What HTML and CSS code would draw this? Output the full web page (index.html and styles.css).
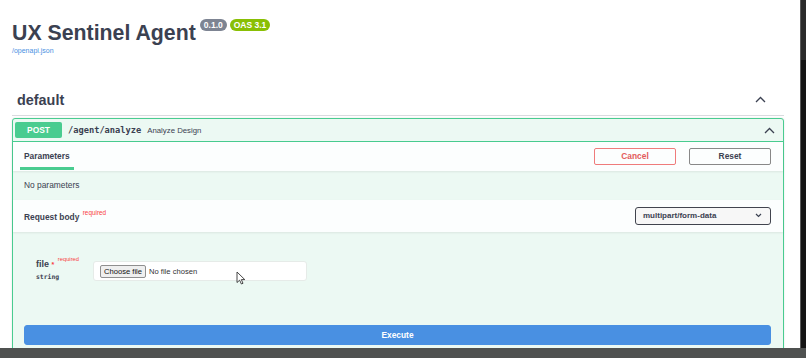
FILE: index.html
```html
<!DOCTYPE html>
<html>
<head lang="en">
    <meta charset="UTF-8">
    <title>UX Sentinel Agent - Swagger UI</title>
    <link rel="stylesheet" href="styles.css">
</head>
<body>
<div class="screen">
    <div class="viewport">
        <div class="info">
            <h1 class="title">UX Sentinel Agent
                <span class="badges">
                    <small class="version">0.1.0</small>
                    <small class="oas">OAS 3.1</small>
                </span>
            </h1>
            <a class="spec-link" href="#">/openapi.json</a>
        </div>
        <section class="tag">
            <h3 class="tag-title">
                <span>default</span>
                <svg class="chev" width="11" height="7" viewBox="0 0 11 7"><path d="M1 6L5.5 1.5L10 6" fill="none" stroke="#3b4151" stroke-width="1.3"/></svg>
            </h3>
            <div class="opblock">
                <div class="summary">
                    <span class="method">POST</span>
                    <span class="path">/agent/analyze</span>
                    <span class="desc">Analyze Design</span>
                    <svg class="chev" width="11" height="7" viewBox="0 0 11 7"><path d="M1 6L5.5 1.5L10 6" fill="none" stroke="#3b4151" stroke-width="1.3"/></svg>
                </div>
                <div class="section-head">
                    <div class="tab">Parameters</div>
                    <div class="actions">
                        <button class="btn cancel">Cancel</button>
                        <button class="btn reset">Reset</button>
                    </div>
                </div>
                <div class="section-body">No parameters</div>
                <div class="section-head body-head">
                    <div class="label">Request body <sup class="req">required</sup></div>
                    <div class="select">
                        <span>multipart/form-data</span>
                        <svg width="7" height="5" viewBox="0 0 7 5"><path d="M1 1L3.5 3.5L6 1" fill="none" stroke="#3b4151" stroke-width="1.2"/></svg>
                    </div>
                </div>
                <div class="body-params">
                    <div class="param">
                        <div class="param-name">
                            <div class="name">file <span class="star">*</span> <sup class="req">required</sup></div>
                            <div class="type">string</div>
                        </div>
                        <div class="file-box">
                            <span class="choose">Choose file</span>
                            <span class="none">No file chosen</span>
                            <svg class="cursor" width="10" height="14" viewBox="0 0 10 14"><path d="M1 1V11.5L3.6 9.2L5.4 13L7 12.3L5.3 8.6H8.8Z" fill="#fff" stroke="#333" stroke-width="0.9" stroke-linejoin="round"/></svg>
                        </div>
                    </div>
                </div>
                <div class="execute-wrap">
                    <button class="execute">Execute</button>
                </div>
            </div>
        </section>
    </div>
    <div class="scrollbar"><div class="thumb"></div></div>
    <div class="statusbar"></div>
</div>
</body>
</html>
```

FILE: styles.css
```css
* {
    margin: 0;
    padding: 0;
    box-sizing: border-box;
}

body {
    background: #ffffff;
    font-family: "Liberation Sans", Arial, sans-serif;
    color: #3b4151;
    overflow: hidden;
}

.screen {
    display: grid;
    grid-template-columns: 1fr 6px;
    grid-template-rows: 348px 10px;
    width: 806px;
    height: 358px;
}

.viewport {
    overflow: hidden;
    padding: 0 16px 0 12px;
}

.scrollbar {
    background: #141414;
    border-left: 1px solid #5a5a5a;
}

.thumb {
    height: 60px;
    background: #2a2a2a;
}

.statusbar {
    grid-column: 1 / -1;
    background: #4f5150;
}

/* info */
.info {
    padding-top: 21px;
}

.title {
    display: flex;
    align-items: flex-start;
    font-size: 21.3px;
    line-height: 24px;
    font-weight: bold;
    color: #3b4151;
}

.badges {
    display: flex;
    gap: 3px;
    margin-left: 4px;
    margin-top: -2px;
}

.badges small {
    display: block;
    height: 12px;
    line-height: 12px;
    padding: 0 4px;
    border-radius: 6px;
    font-size: 8.5px;
    font-weight: bold;
    color: #ffffff;
}

.version {
    background: #7d8492;
}

.oas {
    background: #89bf04;
}

.spec-link {
    display: block;
    margin-top: 1px;
    font-size: 7px;
    line-height: 9px;
    color: #4990e2;
    text-decoration: none;
}

/* tag */
.tag-title {
    display: flex;
    align-items: center;
    justify-content: space-between;
    margin-top: 30px;
    height: 31px;
    padding: 0 18px 1px 5px;
    font-size: 14.4px;
    font-weight: bold;
    border-bottom: 1px solid #d9dbdf;
}

.opblock {
    margin-top: 2px;
    border: 1px solid #49cc90;
    border-radius: 3px;
    background: #ecf9f3;
    box-shadow: 0 0 2px rgba(0, 0, 0, .12);
}

.summary {
    display: flex;
    align-items: center;
    padding: 3px 8px 3px 2px;
    border-bottom: 1px solid #49cc90;
}

.method {
    width: 47px;
    height: 16px;
    line-height: 16px;
    text-align: center;
    background: #49cc90;
    border-radius: 2px;
    color: #ffffff;
    font-size: 8.4px;
    font-weight: bold;
}

.path {
    margin-left: 6px;
    font-family: "DejaVu Sans Mono", monospace;
    font-size: 8.7px;
    font-weight: bold;
}

.desc {
    flex: 1;
    margin-left: 6px;
    font-size: 7.8px;
}

.section-head {
    display: flex;
    align-items: stretch;
    justify-content: space-between;
    height: 29px;
    padding: 0 12px 1px 7px;
    background: rgba(255, 255, 255, .85);
    box-shadow: 0 1px 2px rgba(0, 0, 0, .08);
}

.tab {
    display: flex;
    align-items: center;
    padding: 3px 4px 0;
    font-size: 8.4px;
    font-weight: bold;
    border-bottom: 3px solid #49cc90;
}

.actions {
    display: flex;
    align-items: center;
    gap: 13px;
}

.btn {
    width: 82px;
    height: 17px;
    background: transparent;
    border: 1.5px solid #888888;
    border-radius: 2px;
    font-family: "Liberation Sans", Arial, sans-serif;
    font-size: 8.4px;
    font-weight: bold;
    color: #3b4151;
}

.btn.cancel {
    border-color: #ef7b7b;
    color: #e35b5b;
}

.section-body {
    height: 29px;
    line-height: 28px;
    padding-left: 11px;
    font-size: 8.4px;
}

.body-head {
    height: 32px;
    padding-left: 11px;
    align-items: center;
}

.label {
    font-size: 8.4px;
    font-weight: bold;
}

.req {
    position: relative;
    top: -1px;
    margin-left: 1px;
    font-size: 6.4px;
    font-weight: normal;
    color: #f93e3e;
}

.select {
    display: flex;
    align-items: center;
    justify-content: space-between;
    width: 136px;
    height: 18px;
    padding: 0 8px 0 7px;
    border: 1.5px solid #41444e;
    border-radius: 3px;
    background: #f7f7f7;
    font-size: 8px;
    font-weight: bold;
}

.body-params {
    padding: 29px 0 0 23px;
    height: 91px;
}

.param {
    display: flex;
    align-items: flex-start;
}

.param-name {
    width: 57px;
    margin-top: -6px;
}

.name {
    font-size: 9px;
    line-height: 12px;
    font-weight: bold;
}

.star {
    color: #f93e3e;
    font-size: 7px;
}

.name .req {
    top: -2px;
    font-size: 5.8px;
}

.type {
    margin-top: 2px;
    font-family: "DejaVu Sans Mono", monospace;
    font-size: 6.4px;
    font-weight: bold;
    color: #3b4151;
}

.file-box {
    position: relative;
    display: flex;
    align-items: center;
    width: 214px;
    height: 20px;
    padding-left: 6px;
    background: #ffffff;
    border: 1px solid #e6ebe8;
    border-radius: 3px;
    font-size: 7.6px;
}

.choose {
    padding: 1px 3px;
    background: #efefef;
    border: 1px solid #8f8f8f;
    border-radius: 2px;
    color: #111111;
}

.none {
    margin-left: 3px;
    color: #333333;
}

.cursor {
    position: absolute;
    left: 142px;
    top: 9px;
}

.execute-wrap {
    padding: 2px 12px 8px 11px;
}

.execute {
    display: block;
    width: 100%;
    height: 20px;
    background: #4990e2;
    border: 1px solid #4990e2;
    border-radius: 3px;
    color: #ffffff;
    font-family: "Liberation Sans", Arial, sans-serif;
    font-size: 8.4px;
    font-weight: bold;
}
```
